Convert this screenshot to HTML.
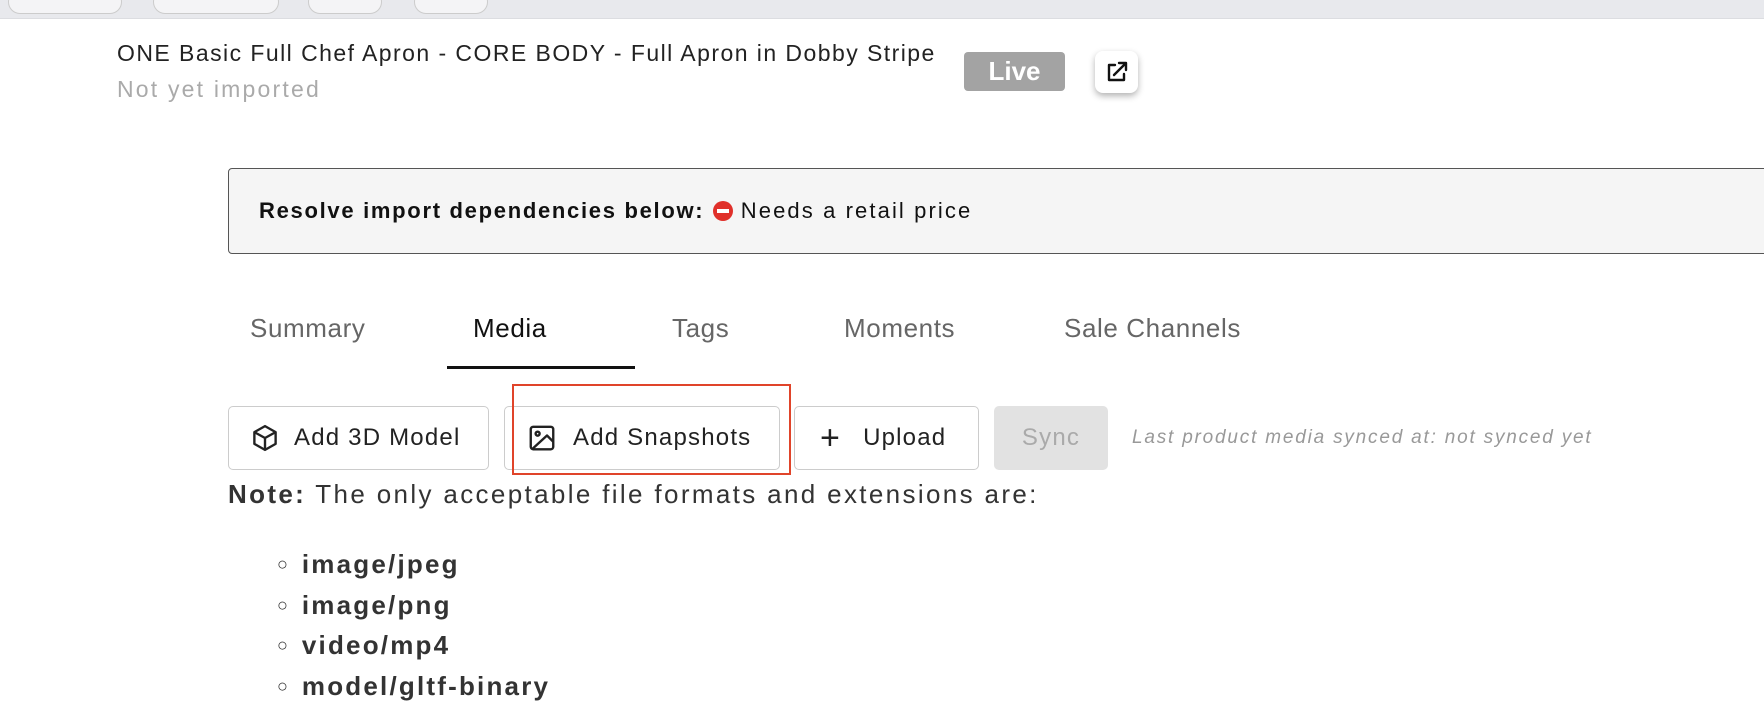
<!DOCTYPE html>
<html><head><style>
body{margin:0;width:1764px;height:696px;overflow:hidden;background:#fff;font-family:"Liberation Sans",sans-serif;color:#222;position:relative}
.a{position:absolute;white-space:nowrap}
.pill{position:absolute;top:-10px;height:22px;border:1px solid #ccc;border-radius:14px;background:#f4f4f6}
.btn{position:absolute;top:406px;height:64px;border:1px solid #ccc;border-radius:5px;box-sizing:border-box;display:flex;align-items:center;font-size:24px;color:#222;letter-spacing:1.2px}
.tab{position:absolute;top:313px;font-size:26px;color:#666;letter-spacing:0.6px}
.li{height:40.5px;line-height:40.5px;overflow:visible}
.li span{font-weight:normal;font-size:18px;margin-right:14px;letter-spacing:0;display:inline-block;vertical-align:top}
</style></head><body>
<div class="a" style="left:0;top:0;width:1764px;height:18px;background:#e8e9ed;border-bottom:1px solid #dcdde1"></div>
<div class="pill" style="left:8px;width:112px"></div>
<div class="pill" style="left:153px;width:124px"></div>
<div class="pill" style="left:308px;width:72px"></div>
<div class="pill" style="left:414px;width:72px"></div>

<div class="a" style="left:117px;top:40px;font-size:23px;color:#222;letter-spacing:1.45px">ONE Basic Full Chef Apron - CORE BODY - Full Apron in Dobby Stripe</div>
<div class="a" style="left:117px;top:76px;font-size:23px;color:#aaa;letter-spacing:2.2px">Not yet imported</div>
<div class="a" style="left:964px;top:52px;width:101px;height:39px;background:#a3a3a3;border-radius:4px;color:#fff;font-weight:bold;font-size:26px;text-align:center;line-height:39px">Live</div>
<div class="a" style="left:1095px;top:51px;width:43px;height:42px;background:#fff;border-radius:8px;box-shadow:0 3px 7px rgba(0,0,0,.3)">
<svg width="43" height="42" viewBox="0 0 43 42" fill="none" stroke="#111" stroke-width="2.4" stroke-linecap="round" stroke-linejoin="round"><path d="M20 14h-6v15h15v-6"/><path d="M19 24L30 13M24 12h7v7"/></svg></div>

<div class="a" style="left:228px;top:168px;width:1560px;height:86px;box-sizing:border-box;border:1px solid #555;border-radius:4px;background:#f5f5f5"></div>
<div class="a" style="left:259px;top:198px;font-size:22px;color:#111;letter-spacing:2.1px"><b style="letter-spacing:1.7px">Resolve import dependencies below:</b> <span style="display:inline-block;width:20px;height:20px;border-radius:50%;background:#e0302a;vertical-align:-3px;position:relative"><span style="position:absolute;left:4px;top:8px;width:12px;height:4px;background:#fff"></span></span> Needs a retail price</div>

<div class="tab" style="left:250px">Summary</div>
<div class="tab" style="left:473px;color:#111">Media</div>
<div class="a" style="left:447px;top:366px;width:188px;height:3px;background:#111"></div>
<div class="tab" style="left:672px">Tags</div>
<div class="tab" style="left:844px">Moments</div>
<div class="tab" style="left:1064px">Sale Channels</div>

<div class="btn" style="left:228px;width:261px"><svg style="margin:0 14px 0 21px" width="30" height="30" viewBox="0 0 24 24" fill="none" stroke="#222" stroke-width="1.9" stroke-linejoin="round"><path d="M12 2.5l8.5 4.8v9.4L12 21.5l-8.5-4.8V7.3z"/><path d="M3.5 7.3L12 12l8.5-4.7M12 12v9.5"/></svg>Add 3D Model</div>
<div class="btn" style="left:504px;width:276px"><svg style="margin:0 16px 0 22px" width="30" height="30" viewBox="0 0 24 24" fill="none" stroke="#222" stroke-width="1.9" stroke-linejoin="round"><rect x="3" y="3" width="18" height="18" rx="2"/><circle cx="8.5" cy="8.5" r="1.6"/><path d="M21 15l-5-5L4 21"/></svg>Add Snapshots</div>
<div class="a" style="left:512px;top:384px;width:279px;height:91px;box-sizing:border-box;border:2px solid #e0442a"></div>
<div class="btn" style="left:794px;width:185px"><span style="font-size:34px;margin:0 22px 0 25px;line-height:1">+</span>Upload</div>
<div class="btn" style="left:994px;width:114px;background:#e2e2e2;border-color:#e2e2e2;color:#aaa;justify-content:center">Sync</div>
<div class="a" style="left:1132px;top:427px;font-size:19px;font-style:italic;color:#999;letter-spacing:1.8px">Last product media synced at: not synced yet</div>

<div class="a" style="left:228px;top:479px;font-size:26px;color:#333;letter-spacing:2.35px"><b>Note:</b> The only acceptable file formats and extensions are:</div>
<div class="a" style="left:277px;top:544px;font-size:26px;font-weight:bold;color:#333;letter-spacing:2.2px">
<div class="li"><span>○</span>image/jpeg</div>
<div class="li"><span>○</span>image/png</div>
<div class="li"><span>○</span>video/mp4</div>
<div class="li"><span>○</span>model/gltf-binary</div>
</div>
</body></html>
